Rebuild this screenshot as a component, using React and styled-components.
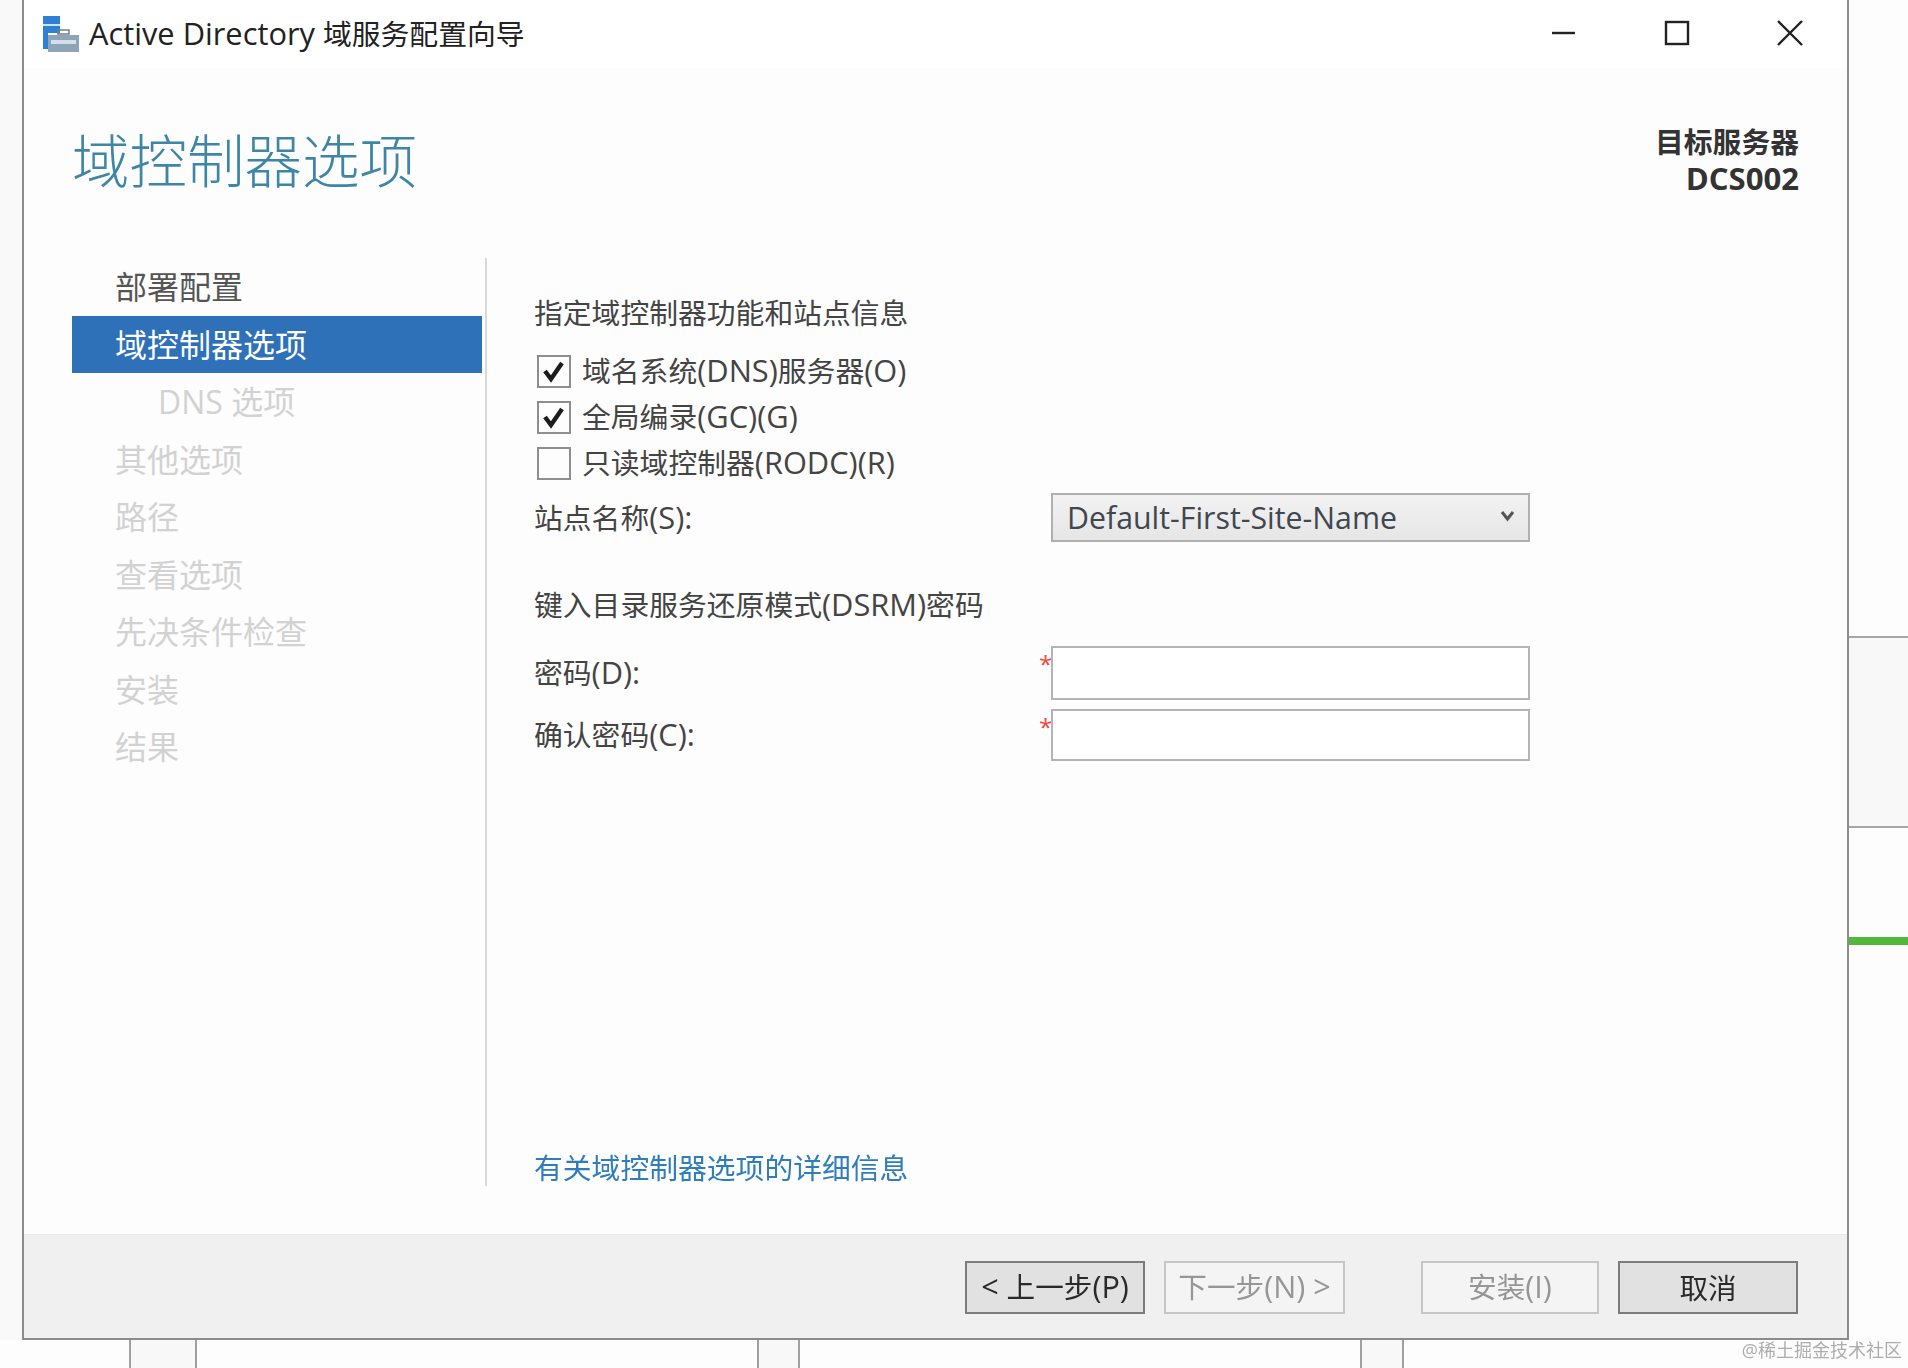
import React from 'react'
import styled, {createGlobalStyle} from 'styled-components'

const GlobalStyle = createGlobalStyle`
	html, body {
		margin: 0;
		padding: 0;
		background: #fdfdfd;
	}
	body {
		font-family: "Open Sans", "Noto Sans CJK SC", sans-serif;
	}
`

const Page = styled.div`
	position: relative;
	width: 1908px;
	height: 1368px;
	overflow: hidden;
	display: flex;
	flex-direction: column;
	filter: blur(0.45px);
`

const Upper = styled.div`
	display: flex;
	height: 1340px;
`

const Gutter = styled.div`
	width: 22px;
	background: #f9f9f9;
`

const Window = styled.div`
	box-sizing: border-box;
	width: 1827px;
	display: flex;
	flex-direction: column;
	border: 2px solid #8c8c8c;
	border-top: 0;
	background: #fdfdfd;
`

const TitleBar = styled.div`
	flex: none;
	height: 68px;
	display: flex;
	align-items: center;
	background: #fff;
	padding-left: 18px;
`

const Latin = styled.span`
	font-size: ${props => props.$scale || 1.07}em;
`

const AppTitle = styled.div`
	margin-left: 10px;
	margin-bottom: 2px;
	font-size: 28.8px;
	line-height: 66px;
	color: #222;
	white-space: nowrap;
`

const WindowButtons = styled.div`
	margin-left: auto;
	display: flex;
	align-items: center;
	margin-right: 44px;
	margin-bottom: 2px;
	gap: 87px;
`

const WindowIcon = styled.svg`
	display: block;
	width: 26px;
	height: 26px;
	fill: none;
	stroke: #222;
	stroke-width: 2.4;
`

const Header = styled.header`
	flex: none;
	box-sizing: border-box;
	height: 190px;
	display: flex;
	justify-content: space-between;
	padding: 0 48px 0 48px;
`

const PageTitle = styled.h1`
	margin: 58px 0 0;
	font-size: 57.5px;
	line-height: 70px;
	font-weight: 300;
	color: #3d86a5;
`

const ServerInfo = styled.div`
	margin-top: 55px;
	text-align: right;
	font-size: 28.8px;
	line-height: 37px;
	font-weight: 700;
	color: #333;
`

const Main = styled.div`
	flex: none;
	height: 928px;
	display: flex;
`

const Nav = styled.nav`
	flex: none;
	width: 410px;
	margin: 0 3px 0 48px;
`

const NavItem = styled.div`
	box-sizing: border-box;
	height: 57.5px;
	line-height: 57px;
	font-size: 32px;
	white-space: nowrap;
	padding-left: ${props => (props.$sub ? '86px' : '43px')};
	color: ${props =>
		props.$active ? '#fff' : props.$enabled ? '#555' : '#d2d2d2'};
	background: ${props => (props.$active ? '#2e71b8' : 'transparent')};
`

const Content = styled.section`
	flex: 1;
	display: flex;
	flex-direction: column;
	border-left: 2px solid #d9d9d9;
	padding: 33px 0 0 47px;
`

const SectionTitle = styled.div`
	height: 44px;
	line-height: 42px;
	font-size: 28.8px;
	color: #444;
	white-space: nowrap;
	margin-top: ${props => props.$top || 0}px;
`

const CheckList = styled.div`
	margin-top: 12px;
`

const CheckRow = styled.label`
	height: 46px;
	display: flex;
	align-items: center;
	padding-left: 3px;
	font-size: 28.8px;
	color: #444;
	white-space: nowrap;
`

const CheckBox = styled.span`
	flex: none;
	box-sizing: border-box;
	width: 34px;
	height: 33px;
	margin-right: 11px;
	border: 2px solid #8e8e8e;
	background: #fdfdfd;
	display: flex;
	align-items: center;
	justify-content: center;
`

const CheckText = styled.span`
	margin-bottom: 2px;
`

const Tick = styled.svg`
	width: 24px;
	height: 24px;
	fill: none;
	stroke: #1c1c1c;
	stroke-width: 4.4;
`

const FieldRow = styled.div`
	display: grid;
	grid-template-columns: 505px 12px 479px;
	align-items: center;
	height: ${props => props.$height}px;
	margin-top: ${props => props.$top}px;
`

const FieldLabel = styled.div`
	font-size: 28.8px;
	color: #444;
	white-space: nowrap;
	margin-bottom: ${props => props.$lift ?? 3}px;
`

const Required = styled.span`
	align-self: start;
	margin-top: 6px;
	font-size: 24px;
	line-height: 24px;
	color: #ee4b3e;
`

const Select = styled.div`
	grid-column: 3;
	box-sizing: border-box;
	height: 100%;
	display: flex;
	align-items: center;
	justify-content: space-between;
	padding: 0 13px 0 14px;
	border: 2px solid #b0b0b0;
	background: linear-gradient(#f2f2f2, #e6e6e6);
	font-size: 30.3px;
	color: #3f4750;
	white-space: nowrap;
`

const Chevron = styled.svg`
	width: 15px;
	height: 12px;
	margin-bottom: 4px;
	fill: none;
	stroke: #555;
	stroke-width: 3;
`

const TextInput = styled.input`
	grid-column: 3;
	box-sizing: border-box;
	height: 100%;
	width: 100%;
	border: 2px solid #b4b4b8;
	background: #fff;
	outline: none;
`

const HelpLink = styled.a`
	margin-top: auto;
	height: 36px;
	line-height: 36px;
	font-size: 28.8px;
	color: #2f7dba;
	text-decoration: none;
	white-space: nowrap;
`

const Footer = styled.footer`
	flex: 1;
	display: flex;
	justify-content: flex-end;
	align-items: flex-start;
	margin-top: 48px;
	padding: 26px 49px 0 0;
	border-top: 1px solid #e9e9e9;
	background: #f0f0f0;
`

const Button = styled.button`
	box-sizing: border-box;
	height: 53px;
	width: ${props => props.$width}px;
	margin-left: ${props => props.$gap}px;
	padding: 0 0 3px;
	font-family: inherit;
	font-size: 28.6px;
	border: 2px solid ${props => (props.disabled ? '#c6c6c6' : '#7c7c7c')};
	background: ${props => (props.disabled ? '#f4f4f4' : '#e1e1e1')};
	color: ${props => (props.disabled ? '#969696' : '#2a2a2a')};
	white-space: nowrap;
`

const RightRail = styled.div`
	flex: 1;
	display: flex;
	flex-direction: column;
`

const RailBlock = styled.div`
	box-sizing: border-box;
	height: ${props => props.$height}px;
	flex: ${props => (props.$height ? 'none' : 1)};
	background: ${props => props.$bg || '#fdfdfd'};
	border-bottom: ${props => (props.$rule ? '2px solid #a6a6a6' : '0')};
`

const BottomStrip = styled.div`
	flex: 1;
	display: flex;
`

const StripCell = styled.div`
	box-sizing: border-box;
	width: ${props => props.$width}px;
	flex: ${props => (props.$width ? 'none' : 1)};
	background: ${props => (props.$slot ? '#f8f8f8' : '#fdfdfd')};
	border-left: ${props => (props.$slot ? '2px solid #a0a0a0' : '0')};
	border-right: ${props => (props.$slot ? '2px solid #a0a0a0' : '0')};
`

const Watermark = styled.div`
	position: absolute;
	right: 6px;
	bottom: 7px;
	font-size: 18px;
	line-height: 22px;
	color: #adadad;
	white-space: nowrap;
`

const navItems = [
	{label: '部署配置', enabled: true},
	{label: '域控制器选项', active: true},
	{label: 'DNS 选项', sub: true},
	{label: '其他选项'},
	{label: '路径'},
	{label: '查看选项'},
	{label: '先决条件检查'},
	{label: '安装'},
	{label: '结果'},
]

const checks = [
	{label: '域名系统(DNS)服务器(O)', checked: true},
	{label: '全局编录(GC)(G)', checked: true},
	{label: '只读域控制器(RODC)(R)', checked: false},
]

// latin runs come out narrower than the original's font, so bump them a bit
function Mixed({text, scale}) {
	return text.split(/([\x20-\x7e]+)/).map((part, i) =>
		i % 2 ? (
			<Latin key={i} $scale={scale}>
				{part}
			</Latin>
		) : (
			part
		),
	)
}

function AppIcon() {
	return (
		<svg width="37" height="36" viewBox="0 0 37 36">
			<rect x="1" y="0" width="17" height="33" fill="#2f80d4" />
			<rect x="1" y="8" width="17" height="2" fill="#cfe3f6" />
			<rect x="6" y="17" width="31" height="19" fill="#8ea4b8" />
			<rect x="6" y="17" width="31" height="2" fill="#fff" />
			<rect x="16" y="14" width="11" height="4" fill="none" stroke="#6d7f90" strokeWidth="1.5" />
			<rect x="9" y="24" width="25" height="4" fill="#d7dfe6" />
		</svg>
	)
}

export default function App() {
	return (
		<Page>
			<GlobalStyle />
			<Upper>
				<Gutter />
				<Window>
					<TitleBar>
						<AppIcon />
						<AppTitle>
							<Mixed text="Active Directory 域服务配置向导" />
						</AppTitle>
						<WindowButtons>
							<WindowIcon viewBox="0 0 26 26">
								<path d="M1 13h23" />
							</WindowIcon>
							<WindowIcon viewBox="0 0 26 26">
								<rect x="2" y="2" width="22" height="22" />
							</WindowIcon>
							<WindowIcon viewBox="0 0 26 26">
								<path d="M1 1l24 24M25 1L1 25" />
							</WindowIcon>
						</WindowButtons>
					</TitleBar>

					<Header>
						<PageTitle>域控制器选项</PageTitle>
						<ServerInfo>
							目标服务器
							<br />
							<Latin $scale={1.08}>DCS002</Latin>
						</ServerInfo>
					</Header>

					<Main>
						<Nav>
							{navItems.map(item => (
								<NavItem
									key={item.label}
									$active={item.active}
									$enabled={item.enabled}
									$sub={item.sub}
								>
									{item.label}
								</NavItem>
							))}
						</Nav>

						<Content>
							<SectionTitle $top={1}>指定域控制器功能和站点信息</SectionTitle>

							<CheckList>
								{checks.map(check => (
									<CheckRow key={check.label}>
										<CheckBox>
											{check.checked && (
												<Tick viewBox="0 0 24 24">
													<path d="M3 12l6 8L20 4" />
												</Tick>
											)}
										</CheckBox>
										<CheckText>
											<Mixed text={check.label} />
										</CheckText>
									</CheckRow>
								))}
							</CheckList>

							<FieldRow $height={49} $top={7}>
								<FieldLabel $lift={1}>
									<Mixed text="站点名称(S):" />
								</FieldLabel>
								<Select>
									Default-First-Site-Name
									<Chevron viewBox="0 0 15 12">
										<path d="M2 2l5.5 7L13 2" />
									</Chevron>
								</Select>
							</FieldRow>

							<SectionTitle $top={41}>
								<Mixed text="键入目录服务还原模式(DSRM)密码" />
							</SectionTitle>

							<FieldRow $height={54} $top={19}>
								<FieldLabel>
									<Mixed text="密码(D):" />
								</FieldLabel>
								<Required>*</Required>
								<TextInput type="password" />
							</FieldRow>

							<FieldRow $height={52} $top={9}>
								<FieldLabel>
									<Mixed text="确认密码(C):" />
								</FieldLabel>
								<Required>*</Required>
								<TextInput type="password" />
							</FieldRow>

							<HelpLink href="#">有关域控制器选项的详细信息</HelpLink>
						</Content>
					</Main>

					<Footer>
						<Button $width={180} $gap={0}>
							<Mixed text="< " />上一步<Mixed text="(P)" />
						</Button>
						<Button $width={181} $gap={19} disabled>
							下一步<Mixed text="(N) >" />
						</Button>
						<Button $width={178} $gap={76} disabled>
							安装<Mixed text="(I)" />
						</Button>
						<Button $width={180} $gap={19}>
							取消
						</Button>
					</Footer>
				</Window>

				<RightRail>
					<RailBlock $height={638} $rule />
					<RailBlock $height={190} $bg="#f8f8f8" $rule />
					<RailBlock $height={109} />
					<RailBlock $height={8} $bg="#52b83c" />
					<RailBlock />
				</RightRail>
			</Upper>

			<BottomStrip>
				<StripCell $width={129} />
				<StripCell $width={68} $slot />
				<StripCell $width={560} />
				<StripCell $width={43} $slot />
				<StripCell $width={560} />
				<StripCell $width={44} $slot />
				<StripCell />
			</BottomStrip>

			<Watermark>@稀土掘金技术社区</Watermark>
		</Page>
	)
}
